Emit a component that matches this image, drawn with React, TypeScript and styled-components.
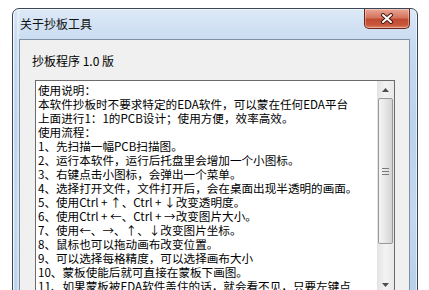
import React from 'react';
import styled, { createGlobalStyle } from 'styled-components';

const helpText = [
  '使用说明：',
  '本软件抄板时不要求特定的EDA软件，可以蒙在任何EDA平台',
  '上面进行1：1的PCB设计；使用方便，效率高效。',
  '使用流程：',
  '1、先扫描一幅PCB扫描图。',
  '2、运行本软件，运行后托盘里会增加一个小图标。',
  '3、右键点击小图标，会弹出一个菜单。',
  '4、选择打开文件，文件打开后，会在桌面出现半透明的画面。',
  '5、使用Ctrl + ↑、Ctrl + ↓改变透明度。',
  '6、使用Ctrl + ←、Ctrl + →改变图片大小。',
  '7、使用←、→、↑、↓改变图片坐标。',
  '8、鼠标也可以拖动画布改变位置。',
  '9、可以选择每格精度，可以选择画布大小',
  '10、蒙板使能后就可直接在蒙板下画图。',
  '11、如果蒙板被EDA软件盖住的话，就会看不见，只要左键点',
].join('\n');

export default function App() {
  return (
    <>
      <Global />
      <Page>
        <Window>
          <TitleBar>
            <Title>关于抄板工具</Title>
            <CloseButton>
              <svg width="14" height="11" viewBox="0 0 14 11">
                <path d="M3 2 L11 9 M11 2 L3 9" stroke="#4a1a12" strokeWidth="4" strokeLinecap="round" />
                <path d="M3 2 L11 9 M11 2 L3 9" stroke="#fff" strokeWidth="2" strokeLinecap="round" />
              </svg>
            </CloseButton>
          </TitleBar>
          <Client>
            <Heading>抄板程序 1.0 版</Heading>
            <TextBox>
              <TextBody>{helpText}</TextBody>
              <ScrollBar>
                <ArrowButton>
                  <svg width="7" height="4" viewBox="0 0 7 4">
                    <path d="M0 4 L3.5 0 L7 4 Z" fill="#4d4d4d" />
                  </svg>
                </ArrowButton>
                <Thumb>
                  <Grip />
                </Thumb>
                <Track />
                <ArrowButton>
                  <svg width="7" height="4" viewBox="0 0 7 4">
                    <path d="M0 0 L3.5 4 L7 0 Z" fill="#4d4d4d" />
                  </svg>
                </ArrowButton>
              </ScrollBar>
            </TextBox>
          </Client>
        </Window>
      </Page>
    </>
  );
}

const Global = createGlobalStyle`
  body {
    margin: 0;
    background: #fff;
    font-family: "Noto Sans CJK SC", "Noto Sans", sans-serif;
    overflow: hidden;
  }
`;

const Page = styled.div`
  width: 429px;
  height: 290px;
  overflow: hidden;
  padding: 8px 0 0 12px;
  box-sizing: border-box;
`;

const Window = styled.div`
  width: 406px;
  height: 300px;
  box-sizing: border-box;
  border: 1px solid #3a4655;
  border-radius: 7px 7px 0 0;
  padding: 0 7px 0 6px;
  display: flex;
  flex-direction: column;
  background:
    linear-gradient(90deg, rgba(255,255,255,0.45) 0px, rgba(160,190,225,0.2) 3px, rgba(255,255,255,0.5) 5px, transparent 7px),
    linear-gradient(180deg, #dce9f7 0%, #c6daf0 12%, #bcd3ec 40%, #c3d8ee 70%, #b6cee8 100%);
  box-shadow: inset 0 0 0 1px rgba(255,255,255,0.6);
`;

const TitleBar = styled.div`
  height: 30px;
  display: flex;
  justify-content: space-between;
  align-items: flex-start;
  flex-shrink: 0;
`;

const Title = styled.div`
  padding: 8px 0 0 1px;
  font-size: 12px;
  line-height: 14px;
  color: #111;
`;

const CloseButton = styled.div`
  width: 46px;
  height: 20px;
  box-sizing: border-box;
  border: 1px solid #6e2418;
  border-top: none;
  border-radius: 0 0 5px 5px;
  background: linear-gradient(180deg, #e9a794 0%, #d47560 45%, #c14a31 55%, #c9573b 85%, #de8a6c 100%);
  box-shadow: inset 0 0 0 1px rgba(255,255,255,0.35);
  display: flex;
  align-items: center;
  justify-content: center;
`;

const Client = styled.div`
  flex: 1;
  background: #f0f0f0;
  border: 1px solid #7f90a6;
  border-bottom: none;
  display: flex;
  flex-direction: column;
`;

const Heading = styled.div`
  margin: 14px 0 0 12px;
  font-size: 12px;
  line-height: 14px;
  color: #000;
`;

const TextBox = styled.div`
  margin: 12px 0 0 15px;
  width: 360px;
  height: 214px;
  box-sizing: border-box;
  border: 1px solid #6b6b6b;
  background: #fff;
  display: flex;
`;

const TextBody = styled.div`
  flex: 1;
  padding: 2px 0 0 2px;
  overflow: hidden;
  font-size: 11.6px;
  line-height: 14px;
  white-space: pre;
  color: #000;
`;

const ScrollBar = styled.div`
  width: 17px;
  display: flex;
  flex-direction: column;
  background: linear-gradient(90deg, #e3e3e3, #f3f3f3 50%, #e8e8e8);
`;

const ArrowButton = styled.div`
  height: 17px;
  display: flex;
  align-items: center;
  justify-content: center;
  flex-shrink: 0;
`;

const Thumb = styled.div`
  height: 146px;
  margin: 0 1px;
  box-sizing: border-box;
  border: 1px solid #989898;
  border-radius: 2px;
  background: linear-gradient(90deg, #f4f4f4 0%, #e6e6e6 50%, #d4d4d4 100%);
  display: flex;
  align-items: center;
  justify-content: center;
`;

const Grip = styled.div`
  width: 7px;
  height: 7px;
  background: repeating-linear-gradient(180deg, #7a7a7a 0 1px, transparent 1px 3px);
`;

const Track = styled.div`
  flex: 1;
`;
